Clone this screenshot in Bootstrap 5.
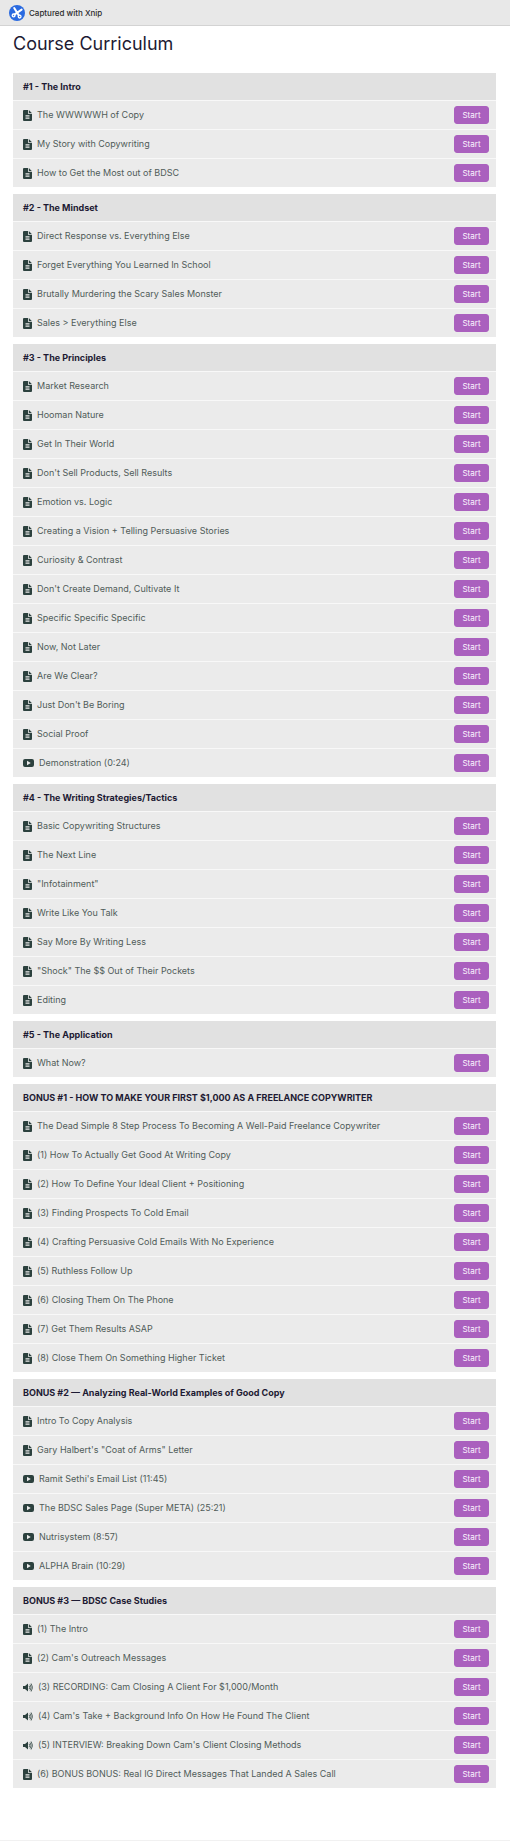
<!DOCTYPE html>
<html lang="en">
<head>
<meta charset="utf-8">
<meta name="viewport" content="width=device-width, initial-scale=1">
<title>Course Curriculum</title>
<link href="https://cdn.jsdelivr.net/npm/bootstrap@5.3.0/dist/css/bootstrap.min.css" rel="stylesheet">
<style>
  body { font-family: Inter, "Liberation Sans", sans-serif; font-size: 9px; line-height: 12px; color: #505c59; background: #fff; }
  .capture-bar { height: 26px; padding: 0 9px; gap: 4px; background: #e8e8e8; border-bottom: 1px solid #d3d3d3; color: #2b2b2b; font-size: 8px; font-weight: 500; }
  .curriculum { padding: 4px 14px 52px 13px; border-bottom: 1px solid #f1f1f1; }
  .curriculum-title { font-size: 18px; line-height: 28px; font-weight: 400; color: #1d1a33; margin-bottom: 15px; }
  .chapter + .chapter { margin-top: 7px; }
  .chapter-title { font-size: 9px; line-height: 27px; font-weight: 700; color: #1d1a33; background: #e1e1e1; padding: 0 10px; }
  .lesson { height: 29px; padding: 0 7px 0 10px; background: #ebebeb; border-top: 1px solid #f8f8f8; }
  .lesson a { color: inherit; gap: 5px; }
  .lesson svg { fill: #2c413e; flex: none; }
  .btn-start { --bs-btn-padding-x: 0; --bs-btn-padding-y: 0; --bs-btn-font-size: 8px; --bs-btn-line-height: 16px; --bs-btn-font-weight: 400; --bs-btn-border-radius: 3px;
    --bs-btn-color: #fbf3fd; --bs-btn-bg: #aa60be; --bs-btn-border-color: #aa60be; --bs-btn-hover-color: #fff; --bs-btn-hover-bg: #974eab; --bs-btn-hover-border-color: #974eab; width: 35px; height: 18px; }
</style>
</head>
<body>
<svg class="d-none" aria-hidden="true">
  <symbol id="doc" viewBox="0 0 9 11"><path fill-rule="evenodd" d="M1 0H5V3.2Q5 4 5.8 4H9V10Q9 11 8 11H1Q0 11 0 10V1Q0 0 1 0ZM2.5 5V5.8H6.5V5ZM2.5 6.6V7.4H6.5V6.6ZM2.5 8.2V9H6.5V8.2Z"/><path d="M5.8 0 9 3.2H5.8Z"/></symbol>
  <symbol id="video" viewBox="0 0 11 8"><path fill-rule="evenodd" d="M2 0H9Q11 0 11 2V6Q11 8 9 8H2Q0 8 0 6V2Q0 0 2 0ZM4 1.8V6.2L7.8 4Z"/></symbol>
  <symbol id="audio" viewBox="0 0 10 9"><path d="M0 3H2L5 .5V8.5L2 6H0Z"/><path d="M6 2.8Q7.5 4.5 6 6.2M7 1.5Q9.3 4.5 7 7.5M8.1.5Q11 4.5 8.1 8.5" fill="none" stroke="#2c413e" stroke-width=".8"/></symbol>
</svg>

<header class="capture-bar d-flex align-items-center">
  <svg width="16" height="16" viewBox="0 0 16 16" aria-hidden="true">
    <circle cx="8" cy="8" r="8" fill="#2a6ae0"/>
    <path d="M5.2 3 9.8 10.4M12.6 4.6 5.4 9.6" stroke="#fff" stroke-width="2" stroke-linecap="round"/>
    <circle cx="4.6" cy="10.4" r="1.4" fill="none" stroke="#fff" stroke-width="1.3"/>
    <circle cx="10.6" cy="11.6" r="1.4" fill="none" stroke="#fff" stroke-width="1.3"/>
  </svg>
  <span>Captured with Xnip</span>
</header>

<main class="curriculum">
  <h1 class="curriculum-title">Course Curriculum</h1>
  <div id="chapters"></div>
</main>

<script src="https://cdn.jsdelivr.net/npm/bootstrap@5.3.0/dist/js/bootstrap.bundle.min.js"></script>
<script>
  // Each lesson is a title, with an optional media kind (documents by default).
  const icons = { doc: [9, 11], video: [11, 8], audio: [10, 9] };
  const chapters = [
    ['#1 - The Intro', ['The WWWWWH of Copy', 'My Story with Copywriting', 'How to Get the Most out of BDSC']],
    ['#2 - The Mindset', ['Direct Response vs. Everything Else', 'Forget Everything You Learned In School', 'Brutally Murdering the Scary Sales Monster', 'Sales > Everything Else']],
    ['#3 - The Principles', ['Market Research', 'Hooman Nature', 'Get In Their World', "Don't Sell Products, Sell Results", 'Emotion vs. Logic', 'Creating a Vision + Telling Persuasive Stories', 'Curiosity & Contrast', "Don't Create Demand, Cultivate It", 'Specific Specific Specific', 'Now, Not Later', 'Are We Clear?', "Just Don't Be Boring", 'Social Proof', ['Demonstration (0:24)', 'video']]],
    ['#4 - The Writing Strategies/Tactics', ['Basic Copywriting Structures', 'The Next Line', '"Infotainment"', 'Write Like You Talk', 'Say More By Writing Less', '"Shock" The $$ Out of Their Pockets', 'Editing']],
    ['#5 - The Application', ['What Now?']],
    ['BONUS #1 - HOW TO MAKE YOUR FIRST $1,000 AS A FREELANCE COPYWRITER', ['The Dead Simple 8 Step Process To Becoming A Well-Paid Freelance Copywriter', '(1) How To Actually Get Good At Writing Copy', '(2) How To Define Your Ideal Client + Positioning', '(3) Finding Prospects To Cold Email', '(4) Crafting Persuasive Cold Emails With No Experience', '(5) Ruthless Follow Up', '(6) Closing Them On The Phone', '(7) Get Them Results ASAP', '(8) Close Them On Something Higher Ticket']],
    ['BONUS #2 — Analyzing Real-World Examples of Good Copy', ['Intro To Copy Analysis', 'Gary Halbert\'s "Coat of Arms" Letter', ["Ramit Sethi's Email List (11:45)", 'video'], ['The BDSC Sales Page (Super META) (25:21)', 'video'], ['Nutrisystem (8:57)', 'video'], ['ALPHA Brain (10:29)', 'video']]],
    ['BONUS #3 — BDSC Case Studies', ['(1) The Intro', "(2) Cam's Outreach Messages", ['(3) RECORDING: Cam Closing A Client For $1,000/Month', 'audio'], ["(4) Cam's Take + Background Info On How He Found The Client", 'audio'], ["(5) INTERVIEW: Breaking Down Cam's Client Closing Methods", 'audio'], '(6) BONUS BONUS: Real IG Direct Messages That Landed A Sales Call']]
  ];
  const esc = s => s.replace(/&/g, '&amp;').replace(/>/g, '&gt;');
  const lesson = item => {
    const [title, kind] = Array.isArray(item) ? item : [item, 'doc'];
    const [w, h] = icons[kind];
    return `<li class="lesson d-flex align-items-center justify-content-between">
      <a href="#" class="d-flex align-items-center text-decoration-none"><svg width="${w}" height="${h}" aria-hidden="true"><use href="#${kind}"/></svg><span>${esc(title)}</span></a>
      <button type="button" class="btn btn-start">Start</button></li>`;
  };
  document.getElementById('chapters').innerHTML = chapters.map(([title, lessons]) =>
    `<section class="chapter"><h2 class="chapter-title mb-0">${esc(title)}</h2><ul class="list-unstyled mb-0">${lessons.map(lesson).join('')}</ul></section>`).join('');
</script>
</body>
</html>
